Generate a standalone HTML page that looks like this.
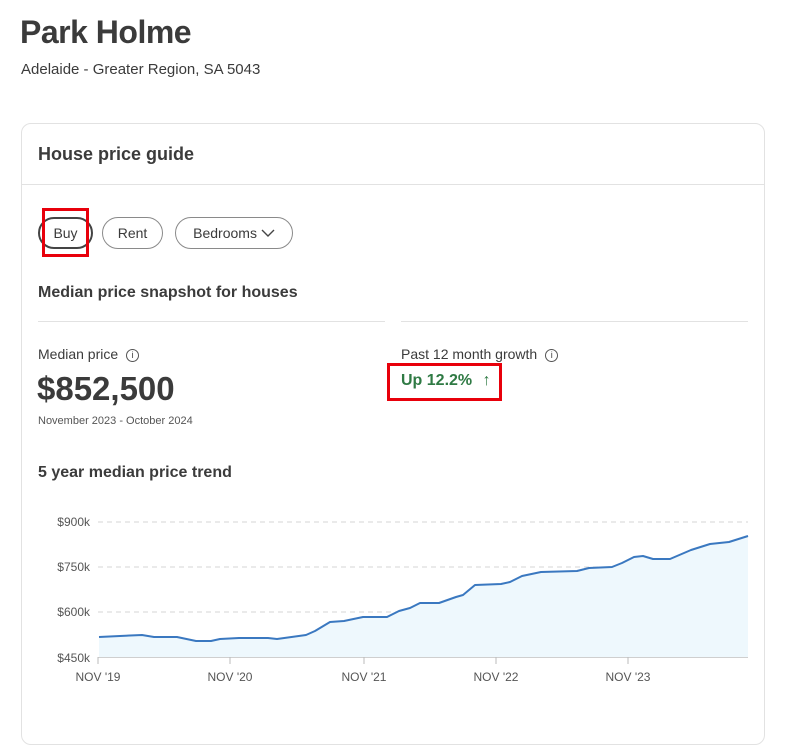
<!DOCTYPE html>
<html><head><meta charset="utf-8"><style>
body{margin:0;background:#fff;font-family:"Liberation Sans",sans-serif;color:#3b3b3b;width:785px;height:714px;overflow:hidden;position:relative}
.a{position:absolute;white-space:nowrap}
.card{position:absolute;left:21px;top:123px;width:742px;height:620px;border:1px solid #e2e2e2;border-radius:10px}
.pill{position:absolute;top:217px;height:32px;box-sizing:border-box;border:1px solid #8a8a8a;border-radius:16px;font-size:14px;line-height:30px;text-align:center;color:#3b3b3b}
.info{display:inline-block;width:11px;height:11px;border:1px solid #555;border-radius:50%;font-size:9px;line-height:11px;text-align:center;vertical-align:1px;margin-left:8px}
</style></head><body>
<div class="a" style="left:20px;top:14px;font-size:32px;font-weight:bold;color:#3b3b3b;letter-spacing:-0.5px">Park Holme</div>
<div class="a" style="left:21px;top:61px;font-size:15px">Adelaide - Greater Region, SA 5043</div>
<div class="card"></div>
<div class="a" style="left:38px;top:144px;font-size:18px;font-weight:bold">House price guide</div>
<div class="a" style="left:22px;top:184px;width:742px;height:1px;background:#e2e2e2"></div>
<div class="pill" style="left:38px;width:55px;border:2px solid #444;line-height:28px">Buy</div>
<div class="a" style="left:42px;top:208px;width:47px;height:49px;border:3px solid #e8000b;box-sizing:border-box"></div>
<div class="pill" style="left:102px;width:61px">Rent</div>
<div class="pill" style="left:175px;width:118px">Bedrooms <svg width="14" height="10" viewBox="0 0 14 10" style="vertical-align:0"><path d="M1 2l6 6 6-6" fill="none" stroke="#444" stroke-width="1.4"/></svg></div>
<div class="a" style="left:38px;top:284px;font-size:16px;font-weight:bold">Median price snapshot for houses</div>
<div class="a" style="left:38px;top:321px;width:347px;height:1px;background:#e2e2e2"></div>
<div class="a" style="left:401px;top:321px;width:347px;height:1px;background:#e2e2e2"></div>
<div class="a" style="left:38px;top:346px;font-size:14px">Median price<span class="info">i</span></div>
<div class="a" style="left:37px;top:370px;font-size:33px;font-weight:bold">$852,500</div>
<div class="a" style="left:38px;top:415px;font-size:11px;color:#555">November 2023 - October 2024</div>
<div class="a" style="left:401px;top:346px;font-size:14px">Past 12 month growth<span class="info">i</span></div>
<div class="a" style="left:387px;top:363px;width:115px;height:38px;border:3px solid #e8000b;box-sizing:border-box"></div>
<div class="a" style="left:401px;top:372px;font-size:16px;font-weight:bold;color:#2f7a44">Up 12.2% <span style="font-weight:normal;margin-left:6px">↑</span></div>
<div class="a" style="left:38px;top:464px;font-size:16px;font-weight:bold">5 year median price trend</div>
<svg class="a" style="left:0;top:500px" width="785" height="200" viewBox="0 500 785 200">
<g stroke="#d6d6d6" stroke-dasharray="5,4" stroke-width="1"><line x1="98" y1="522" x2="748" y2="522"/><line x1="98" y1="567" x2="748" y2="567"/><line x1="98" y1="612" x2="748" y2="612"/></g>
<path d="M99 637L120 636L142 635L154 637L177 637L196 641L211 641L220 639L239 638L268 638L277 639L306 635L315 631L330 622L344 621L363 617L387 617L399 611L410 608L420 603L439 603L456 597L463 595L475 585L501 584L510 582L522 576L541 572L577 571L589 568L612 567L622 563L634 557L643 556L653 559L670 559L691 550L710 544L729 542L748 536L748 657L99 657Z" fill="#eef8fd"/>
<path d="M99 637L120 636L142 635L154 637L177 637L196 641L211 641L220 639L239 638L268 638L277 639L306 635L315 631L330 622L344 621L363 617L387 617L399 611L410 608L420 603L439 603L456 597L463 595L475 585L501 584L510 582L522 576L541 572L577 571L589 568L612 567L622 563L634 557L643 556L653 559L670 559L691 550L710 544L729 542L748 536" fill="none" stroke="#3a78c0" stroke-width="2" stroke-linejoin="round"/>
<line x1="98" y1="657.5" x2="748" y2="657.5" stroke="#cfcfcf"/>
<g stroke="#bbb"><line x1="98" y1="657" x2="98" y2="664"/><line x1="230" y1="657" x2="230" y2="664"/><line x1="364" y1="657" x2="364" y2="664"/><line x1="496" y1="657" x2="496" y2="664"/><line x1="628" y1="657" x2="628" y2="664"/></g>
<g font-family="Liberation Sans" font-size="12" fill="#555" text-anchor="end"><text x="90" y="526">$900k</text><text x="90" y="571">$750k</text><text x="90" y="616">$600k</text><text x="90" y="662">$450k</text></g>
<g font-family="Liberation Sans" font-size="12" fill="#555" text-anchor="middle"><text x="98" y="681">NOV '19</text><text x="230" y="681">NOV '20</text><text x="364" y="681">NOV '21</text><text x="496" y="681">NOV '22</text><text x="628" y="681">NOV '23</text></g>
</svg>
</body></html>
